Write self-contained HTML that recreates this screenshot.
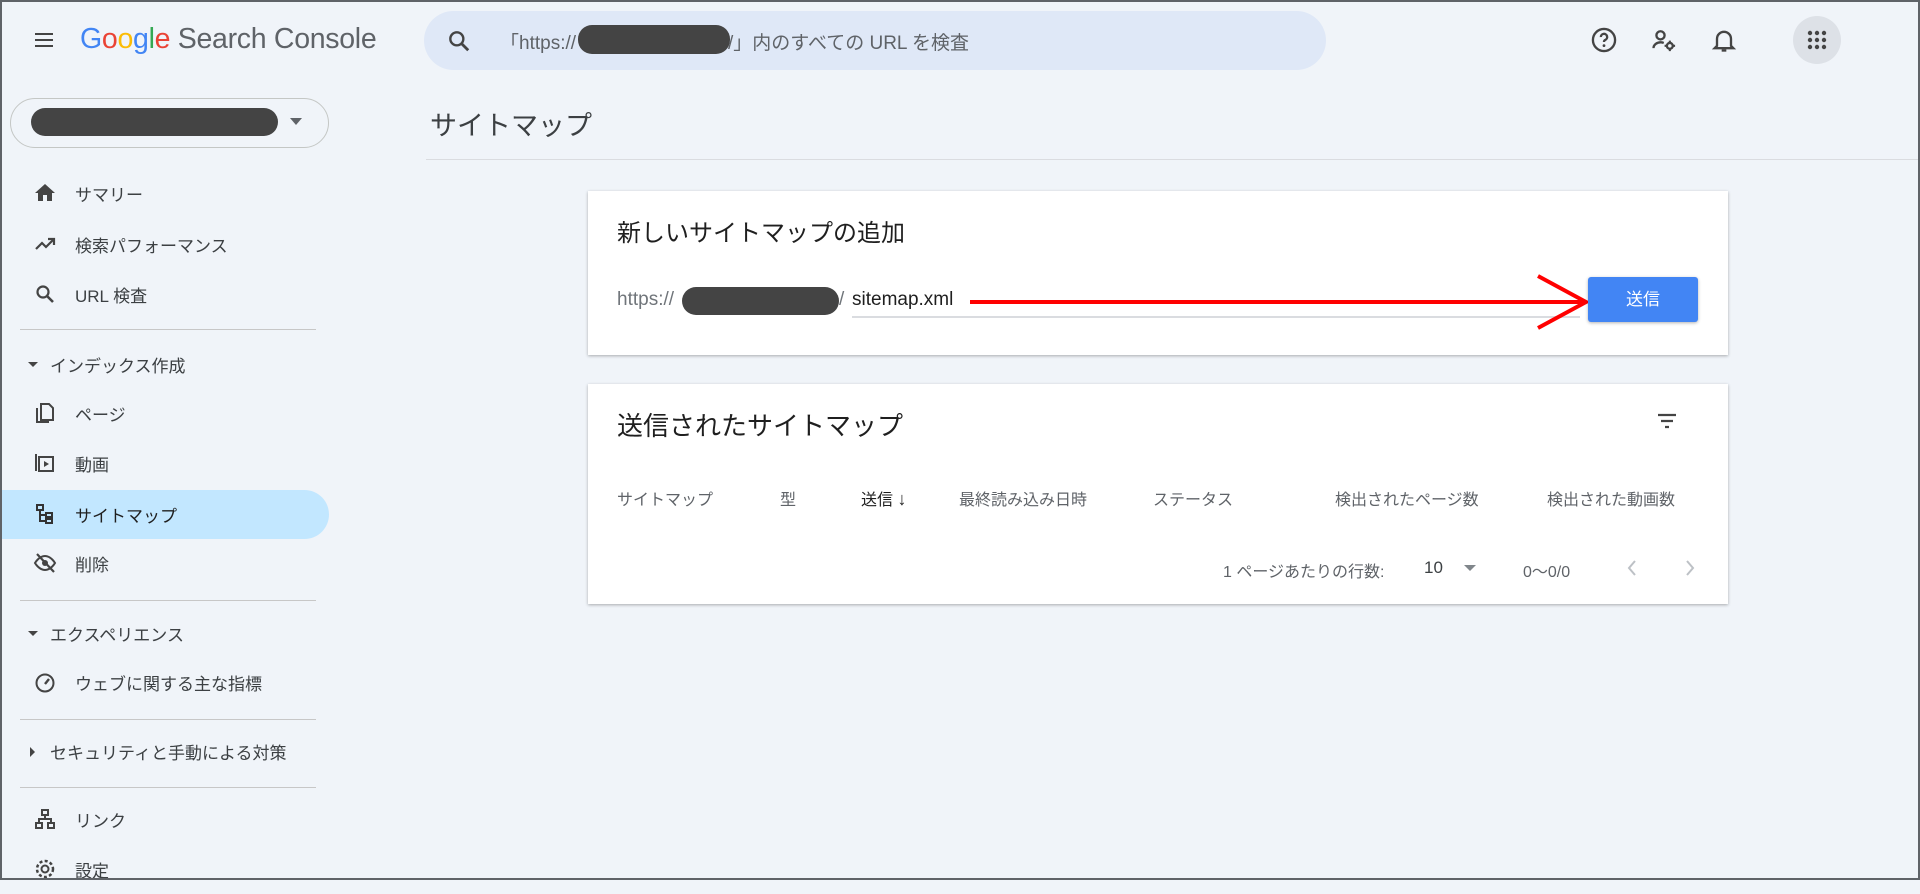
<!DOCTYPE html>
<html><head><meta charset="utf-8"><style>
*{margin:0;padding:0;box-sizing:border-box}
body{width:1920px;height:880px;background:#f0f4f9;font-family:"Liberation Sans","Noto Sans CJK JP",sans-serif;color:#3c4043;position:relative;overflow:hidden}
.frame{position:absolute;left:0;top:0;width:1920px;height:880px;border:2px solid #5f6368;border-top-width:2px;pointer-events:none;z-index:9}
.a{position:absolute;white-space:nowrap}
.nav{position:absolute;left:0;width:329px;height:50px;display:flex;align-items:center;font-size:17px;color:#3c4043}
.nav svg{position:absolute;left:33px;width:24px;height:24px}
.nav span{position:absolute;left:75px}
.sec{position:absolute;left:0;font-size:17px;color:#3c4043;display:flex;align-items:center}
.div{position:absolute;left:20px;width:296px;height:1px;background:#c7c7c7}
.card{position:absolute;left:588px;width:1140px;background:#fff;box-shadow:0 1px 3px rgba(0,0,0,.3)}
.blob{position:absolute;background:#444;border-radius:14px}
.th{position:absolute;top:498px;font-size:16px;color:#5f6368;transform:translateY(-50%)}
</style></head><body>
<div class="frame"></div>
<svg class="a" style="left:32px;top:28px" width="24" height="24" viewBox="0 0 24 24"><path d="M3 6h18M3 12h18M3 18h18" stroke="#444" stroke-width="2"/></svg>
<div class="a" style="left:80px;top:23px;font-size:28.5px;color:#5f6368;letter-spacing:-0.3px"><span style="color:#4285f4">G</span><span style="color:#ea4335">o</span><span style="color:#fbbc05">o</span><span style="color:#4285f4">g</span><span style="color:#34a853">l</span><span style="color:#ea4335">e</span> Search Console</div>
<div class="a" style="left:424px;top:11px;width:902px;height:59px;border-radius:30px;background:#dfe8f7"></div>
<svg class="a" style="left:446px;top:28px" width="26" height="26" viewBox="0 0 24 24"><circle cx="10" cy="10" r="6" fill="none" stroke="#444" stroke-width="2.2"/><path d="M14.5 14.5l6 6" stroke="#444" stroke-width="2.6"/></svg>
<div class="a" style="left:500px;top:28px;font-size:19px;color:#5f6368">「https://</div>
<div class="blob" style="left:578px;top:25px;width:152px;height:29px"></div>
<div class="a" style="left:728px;top:28px;font-size:19px;color:#5f6368">/」内のすべての URL を検査</div>
<svg class="a" style="left:1590px;top:26px" width="28" height="28" viewBox="0 0 24 24"><circle cx="12" cy="12" r="9.5" fill="none" stroke="#444" stroke-width="2"/><path d="M9.3 9.5a2.7 2.7 0 1 1 3.8 2.4c-.8.4-1.1.9-1.1 1.8" fill="none" stroke="#444" stroke-width="2"/><circle cx="12" cy="16.8" r="1.2" fill="#444"/></svg>
<svg class="a" style="left:1650px;top:26px" width="28" height="28" viewBox="0 0 24 24"><circle cx="9" cy="8" r="3.5" fill="none" stroke="#444" stroke-width="2"/><path d="M3 19c0-3 3-5 6-5 1 0 2 .2 2.8.5" fill="none" stroke="#444" stroke-width="2"/><circle cx="17" cy="17" r="2.5" fill="none" stroke="#444" stroke-width="2"/><path d="M17 12.5v2M17 19.5v2M12.5 17h2M19.5 17h2" stroke="#444" stroke-width="1.8"/></svg>
<svg class="a" style="left:1710px;top:26px" width="28" height="28" viewBox="0 0 24 24"><path d="M6 17V11a6 6 0 0 1 12 0v6l2 2H4z" fill="none" stroke="#444" stroke-width="2"/><path d="M10 21h4" stroke="#444" stroke-width="2"/></svg>
<div class="a" style="left:1793px;top:16px;width:48px;height:48px;border-radius:50%;background:#dde1e7"></div>
<svg class="a" style="left:1806px;top:29px" width="22" height="22" viewBox="0 0 22 22"><g fill="#444"><circle cx="4" cy="4" r="2.2"/><circle cx="11" cy="4" r="2.2"/><circle cx="18" cy="4" r="2.2"/><circle cx="4" cy="11" r="2.2"/><circle cx="11" cy="11" r="2.2"/><circle cx="18" cy="11" r="2.2"/><circle cx="4" cy="18" r="2.2"/><circle cx="11" cy="18" r="2.2"/><circle cx="18" cy="18" r="2.2"/></g></svg>
<div class="a" style="left:10px;top:98px;width:319px;height:50px;border:1px solid #c4c7c5;border-radius:25px"></div>
<div class="blob" style="left:31px;top:108px;width:247px;height:28px"></div>
<svg class="a" style="left:290px;top:118px" width="12" height="8"><path d="M0 0h12L6 7z" fill="#5f6368"/></svg>
<div class="a" style="left:430px;top:104px;font-size:27px;color:#3c4043">サイトマップ</div>
<div class="a" style="left:426px;top:159px;width:1494px;height:1px;background:#dadce0"></div>
<div class="nav" style="top:168px"><svg viewBox="0 0 24 24"><path d="M10 20v-6h4v6h5v-8h3L12 3 2 12h3v8z" fill="#444"/></svg><span>サマリー</span></div>
<div class="nav" style="top:219px"><svg viewBox="0 0 24 24"><path d="M3 17l6-6 4 4 8-8" fill="none" stroke="#444" stroke-width="2.2"/><path d="M15 7h6v6" fill="none" stroke="#444" stroke-width="2.2"/></svg><span>検索パフォーマンス</span></div>
<div class="nav" style="top:269px"><svg viewBox="0 0 24 24"><circle cx="10" cy="10" r="5.5" fill="none" stroke="#444" stroke-width="2.2"/><path d="M14 14l6 6" stroke="#444" stroke-width="2.6"/></svg><span>URL 検査</span></div>
<div class="div" style="top:329px"></div>
<div class="sec" style="top:352px;left:28px"><svg width="10" height="6" style="margin-right:12px"><path d="M0 0h10L5 5z" fill="#444"/></svg>インデックス作成</div>
<div class="nav" style="top:388px"><svg viewBox="0 0 24 24"><path d="M8 3h8l4 4v12H8z M4 7v14h12" fill="none" stroke="#444" stroke-width="2"/></svg><span>ページ</span></div>
<div class="nav" style="top:438px"><svg viewBox="0 0 24 24"><rect x="6" y="6" width="14" height="14" fill="none" stroke="#444" stroke-width="2"/><path d="M3 3v17" stroke="#444" stroke-width="2"/><path d="M11 10l5 3-5 3z" fill="#444"/></svg><span>動画</span></div>
<div class="a" style="left:0;top:490px;width:329px;height:49px;background:#c2e7ff;border-radius:0 25px 25px 0"></div>
<div class="nav" style="top:489px;color:#1f1f1f"><svg viewBox="0 0 24 24"><g fill="none" stroke="#333" stroke-width="2"><rect x="4" y="3" width="6" height="5"/><rect x="13" y="11" width="6" height="4"/><rect x="13" y="17" width="6" height="4"/><path d="M7 8v11h6M7 13h6"/></g></svg><span>サイトマップ</span></div>
<div class="nav" style="top:538px"><svg viewBox="0 0 24 24"><path d="M2 12s4-7 10-7 10 7 10 7-4 7-10 7S2 12 2 12z" fill="none" stroke="#444" stroke-width="2"/><circle cx="12" cy="12" r="3" fill="#444"/><path d="M4 3l17 18" stroke="#444" stroke-width="2.2"/></svg><span>削除</span></div>
<div class="div" style="top:600px"></div>
<div class="sec" style="top:621px;left:28px"><svg width="10" height="6" style="margin-right:12px"><path d="M0 0h10L5 5z" fill="#444"/></svg>エクスペリエンス</div>
<div class="nav" style="top:657px"><svg viewBox="0 0 24 24"><circle cx="12" cy="13" r="8.5" fill="none" stroke="#444" stroke-width="2"/><path d="M12 14l4-5" stroke="#444" stroke-width="2.4"/></svg><span>ウェブに関する主な指標</span></div>
<div class="div" style="top:719px"></div>
<div class="sec" style="top:739px;left:30px"><svg width="6" height="10" style="margin-right:14px"><path d="M0 0v10l5-5z" fill="#444"/></svg>セキュリティと手動による対策</div>
<div class="div" style="top:787px"></div>
<div class="nav" style="top:794px"><svg viewBox="0 0 24 24"><g fill="none" stroke="#444" stroke-width="2"><rect x="9" y="3" width="6" height="5"/><rect x="3" y="16" width="6" height="5"/><rect x="15" y="16" width="6" height="5"/><path d="M12 8v4M6 16v-4h12v4"/></g></svg><span>リンク</span></div>
<div class="nav" style="top:844px"><svg viewBox="0 0 24 24"><circle cx="12" cy="12" r="3.5" fill="none" stroke="#444" stroke-width="2"/><circle cx="12" cy="12" r="8" fill="none" stroke="#444" stroke-width="2.5" stroke-dasharray="3 2.3"/></svg><span>設定</span></div>
<div class="card" style="top:191px;height:164px"></div>
<div class="a" style="left:617px;top:213px;font-size:24px;color:#1f1f1f">新しいサイトマップの追加</div>
<div class="a" style="left:617px;top:289px;font-size:19px;color:#70757a">https://</div>
<div class="blob" style="left:682px;top:287px;width:157px;height:28px"></div>
<div class="a" style="left:839px;top:289px;font-size:19px;color:#70757a">/</div>
<div class="a" style="left:852px;top:289px;font-size:19px;color:#1f1f1f">sitemap.xml</div>
<div class="a" style="left:852px;top:316px;width:728px;height:2px;background:#dadce0"></div>
<svg class="a" style="left:960px;top:270px" width="632" height="64"><path d="M10 32H626" stroke="#f00" stroke-width="4"/><path d="M578 6L626 32L578 58" fill="none" stroke="#f00" stroke-width="4"/></svg>
<div class="a" style="left:1588px;top:277px;width:110px;height:45px;background:#4285f4;border-radius:3px;box-shadow:0 1px 3px rgba(0,0,0,.3);color:#fff;font-size:17px;text-align:center;line-height:45px">送信</div>
<div class="card" style="top:384px;height:220px"></div>
<div class="a" style="left:617px;top:406px;font-size:26px;color:#1f1f1f">送信されたサイトマップ</div>
<svg class="a" style="left:1655px;top:409px" width="24" height="24" viewBox="0 0 24 24"><path d="M3 6h18M6 12h12M10 18h4" stroke="#444" stroke-width="2.2"/></svg>
<div class="th" style="left:617px">サイトマップ</div>
<div class="th" style="left:780px">型</div>
<div class="th" style="left:861px;color:#1f1f1f">送信 <span style="font-size:18px">↓</span></div>
<div class="th" style="left:959px">最終読み込み日時</div>
<div class="th" style="left:1153px">ステータス</div>
<div class="th" style="left:1335px">検出されたページ数</div>
<div class="th" style="left:1547px">検出された動画数</div>
<div class="a" style="left:1223px;top:558px;font-size:16px;color:#5f6368">1 ページあたりの行数:</div>
<div class="a" style="left:1424px;top:558px;font-size:17px;color:#3c4043">10</div>
<svg class="a" style="left:1464px;top:565px" width="12" height="7"><path d="M0 0h12L6 6z" fill="#80868b"/></svg>
<div class="a" style="left:1523px;top:558px;font-size:16px;color:#5f6368">0〜0/0</div>
<svg class="a" style="left:1622px;top:556px" width="20" height="24"><path d="M13 5L7 12l6 7" fill="none" stroke="#bdc1c6" stroke-width="2"/></svg>
<svg class="a" style="left:1680px;top:556px" width="20" height="24"><path d="M7 5l6 7-6 7" fill="none" stroke="#bdc1c6" stroke-width="2"/></svg>
</body></html>
